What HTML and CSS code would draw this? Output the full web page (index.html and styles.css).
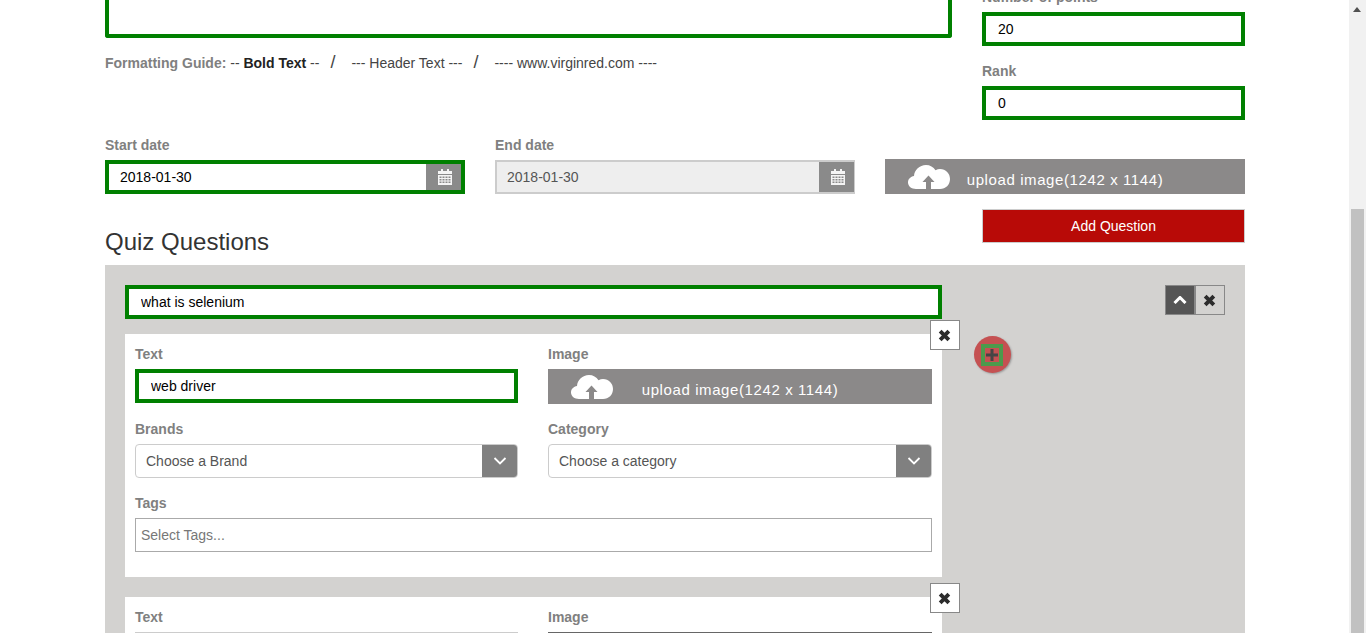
FILE: index.html
```html
<!DOCTYPE html>
<html>
<head>
    <title>Quiz Questions</title>
    <link rel="stylesheet" href="styles.css">
</head>
<body>
    <svg class="icon-defs" width="0" height="0">
        <symbol id="cloud" viewBox="0 0 42 24">
            <path d="M8 24C3.500 24 0 21.200 0 17.500C0 14 2.600 11.600 6 11C6.400 5 11.500 0 18 0C22 0 25.400 2 27.500 5.200C29 4.400 30.500 4 32 4C37.800 4 42 8.500 42 14C42 19.800 37.800 24 32 24H23V17H26.500L20.500 10.500L14.500 17H18V24Z"/>
        </symbol>
        <symbol id="calendar" viewBox="0 0 14 16">
            <path d="M3 0h2v2h4V0h2v2h3v3H0V2h3zM0 6h14v10H0zM1.500 7.500v1.500h2V7.500zm3 0v1.500h2V7.500zm3 0v1.500h2V7.500zm3 0v1.500h2V7.500zm-9 2.500v1.500h2V10zm3 0v1.500h2V10zm3 0v1.500h2V10zm3 0v1.500h2V10zm-9 2.500V14h2v-1.500zm3 0V14h2v-1.500zm3 0V14h2v-1.500zm3 0V14h2v-1.500z" fill-rule="evenodd"/>
        </symbol>
        <symbol id="times" viewBox="0 0 12 12">
            <path d="M2 2l8 8M10 2l-8 8" fill="none" stroke="currentColor" stroke-width="3.600"/>
        </symbol>
        <symbol id="chevron" viewBox="0 0 14 8">
            <path d="M1.500 1l5.500 5.500L12.500 1" fill="none" stroke="currentColor"/>
        </symbol>
    </svg>

    <div class="page">
        <main class="content">
            <section class="top-row">
                <div>
                    <div class="description-box"></div>
                    <p class="format-guide"><b class="guide-title">Formatting Guide:</b> -- <b>Bold Text</b> --<span class="slash">/</span>--- Header Text ---<span class="slash">/</span>---- www.virginred.com ----</p>
                </div>
                <div>
                    <label class="field-label">Number of points</label>
                    <input class="green-input points-input" type="text" value="20">
                    <label class="field-label">Rank</label>
                    <input class="green-input" type="text" value="0">
                </div>
            </section>

            <section class="date-row">
                <div>
                    <label class="field-label">Start date</label>
                    <div class="date-box date-active">
                        <input type="text" value="2018-01-30">
                        <span class="date-addon"><svg class="calendar-icon"><use href="#calendar"/></svg></span>
                    </div>
                </div>
                <div>
                    <label class="field-label">End date</label>
                    <div class="date-box date-disabled">
                        <input type="text" value="2018-01-30" disabled>
                        <span class="date-addon"><svg class="calendar-icon"><use href="#calendar"/></svg></span>
                    </div>
                </div>
                <div class="upload">
                    <svg class="cloud-icon"><use href="#cloud"/></svg>
                    upload image(1242 x 1144)
                </div>
            </section>

            <section class="quiz-head">
                <h2>Quiz Questions</h2>
                <button class="add-question">Add Question</button>
            </section>

            <section class="quiz-panel">
                <div class="question-row">
                    <input class="green-input question-input" type="text" value="what is selenium">
                    <div class="question-tools">
                        <button class="tool-btn tool-up"><svg class="chevron-up"><use href="#chevron"/></svg></button>
                        <button class="tool-btn"><svg class="times-icon"><use href="#times"/></svg></button>
                    </div>
                </div>

                <div class="answer-row">
                    <div class="answer-card">
                        <button class="card-close"><svg class="times-icon"><use href="#times"/></svg></button>
                        <div class="answer-grid">
                            <div>
                                <label class="field-label">Text</label>
                                <input class="green-input" type="text" value="web driver">
                            </div>
                            <div>
                                <label class="field-label">Image</label>
                                <div class="upload">
                                    <svg class="cloud-icon"><use href="#cloud"/></svg>
                                    upload image(1242 x 1144)
                                </div>
                            </div>
                            <div>
                                <label class="field-label">Brands</label>
                                <div class="select-box">
                                    <span class="select-text">Choose a Brand</span>
                                    <span class="select-addon"><svg class="chevron-icon"><use href="#chevron"/></svg></span>
                                </div>
                            </div>
                            <div>
                                <label class="field-label">Category</label>
                                <div class="select-box">
                                    <span class="select-text">Choose a category</span>
                                    <span class="select-addon"><svg class="chevron-icon"><use href="#chevron"/></svg></span>
                                </div>
                            </div>
                            <div class="wide">
                                <label class="field-label">Tags</label>
                                <input class="tags-input" type="text" placeholder="Select Tags...">
                            </div>
                        </div>
                    </div>
                    <button class="add-answer"><span class="add-answer-mark"><svg class="plus-icon" viewBox="0 0 12 12"><path d="M6 0v12M0 6h12"/></svg></span></button>
                </div>

                <div class="answer-row second">
                    <div class="answer-card">
                        <button class="card-close"><svg class="times-icon"><use href="#times"/></svg></button>
                        <div class="answer-grid">
                            <div>
                                <label class="field-label">Text</label>
                                <div class="cut-line"></div>
                            </div>
                            <div>
                                <label class="field-label">Image</label>
                                <div class="cut-line cut-dark"></div>
                            </div>
                        </div>
                    </div>
                </div>
            </section>
        </main>

        <div class="scrollbar">
            <span class="scroll-arrow"></span>
            <span class="scroll-thumb"></span>
        </div>
    </div>
</body>
</html>
```

FILE: styles.css
```css
* {
    box-sizing: border-box;
}
html, body {
    margin: 0;
    height: 633px;
    overflow: hidden;
}
body {
    font-family: "Liberation Sans", Arial, sans-serif;
    font-size: 14px;
    color: #333;
    background: #fff;
}
.icon-defs {
    display: block;
    height: 0;
}
.page {
    display: flex;
    height: 633px;
    overflow: hidden;
}
.content {
    width: 1349px;
    flex: none;
    margin-top: -13px;
    padding: 0 104px 0 105px;
}

/* top fields */
.top-row {
    display: grid;
    grid-template-columns: 847px 263px;
    column-gap: 30px;
}
.description-box {
    height: 51px;
    border: 4px solid #008000;
    border-top: 0;
    border-radius: 0 0 3px 3px;
}
.format-guide {
    margin: 14px 0 0;
    line-height: 20px;
    color: #444;
    white-space: nowrap;
}
.format-guide b {
    color: #222;
}
.format-guide .guide-title {
    color: #808080;
}
.slash {
    font-size: 18px;
    margin: 0 16px 0 11px;
}
.field-label {
    display: block;
    height: 20px;
    line-height: 20px;
    margin-bottom: 5px;
    font-weight: bold;
    color: #808080;
}
.green-input {
    display: block;
    width: 100%;
    height: 34px;
    padding: 0 12px;
    border: 4px solid #008000;
    outline: 0;
    font: 14px "Liberation Sans", Arial, sans-serif;
    color: #000;
    background: #fff;
}
.points-input {
    margin-bottom: 15px;
}

/* dates and upload */
.date-row {
    display: grid;
    grid-template-columns: repeat(3, 360px);
    column-gap: 30px;
    align-items: end;
    margin-top: 15px;
}
.date-box {
    display: flex;
    height: 34px;
}
.date-box input {
    flex: 1;
    min-width: 0;
    border: 0;
    outline: 0;
    padding: 0 11px;
    font: 14px "Liberation Sans", Arial, sans-serif;
    background: transparent;
}
.date-active {
    border: 4px solid #008000;
}
.date-active input {
    color: #000;
}
.date-disabled {
    border: 2px solid #ccc;
    border-right-width: 1px;
    background: #eee;
}
.date-disabled input {
    color: #555;
    padding: 0 10px;
}
.date-addon {
    display: flex;
    align-items: center;
    justify-content: center;
    width: 35px;
    padding-left: 2px;
    background: #8a8a8a;
}
.calendar-icon {
    width: 14px;
    height: 16px;
    fill: #f4f4f4;
}
.upload {
    position: relative;
    height: 35px;
    padding-top: 4px;
    line-height: 33px;
    text-align: center;
    font-size: 15px;
    letter-spacing: 0.6px;
    color: #fff;
    background: #8b8989;
}
.cloud-icon {
    position: absolute;
    left: 23px;
    top: 6px;
    width: 42px;
    height: 24px;
    fill: #fff;
}

/* quiz heading */
.quiz-head {
    display: flex;
    justify-content: space-between;
    height: 56px;
    margin-top: 15px;
}
.quiz-head h2 {
    align-self: flex-end;
    margin: 0;
    padding-bottom: 10px;
    font-size: 24px;
    font-weight: normal;
    line-height: 26px;
    color: #333;
}
.add-question {
    width: 263px;
    height: 34px;
    border: 1px solid #ccc;
    background: #b80a07;
    color: #fff;
    font: 14px "Liberation Sans", Arial, sans-serif;
}

/* quiz panel */
.quiz-panel {
    padding: 20px;
    height: 400px;
    background: #d3d2d0;
}
.question-row {
    display: flex;
    justify-content: space-between;
    margin-bottom: 15px;
}
.question-input {
    width: 817px;
}
.question-tools {
    display: flex;
}
.tool-btn {
    display: flex;
    align-items: center;
    justify-content: center;
    width: 30px;
    height: 30px;
    padding: 0 1px 0 0;
    border: 1px solid #888;
    background: transparent;
    color: #2c2c2c;
}
.tool-up {
    background: #555;
    color: #fff;
}
.times-icon {
    width: 13px;
    height: 13px;
}
.chevron-up {
    width: 14px;
    height: 8px;
    stroke-width: 3;
    transform: rotate(180deg);
}
.answer-row {
    display: flex;
    align-items: flex-start;
    column-gap: 32px;
}
.answer-row.second {
    margin-top: 20px;
}
.answer-card {
    position: relative;
    width: 817px;
    flex: none;
    padding: 10px 10px 25px;
    background: #fff;
}
.card-close {
    position: absolute;
    top: -14px;
    right: -18px;
    display: flex;
    align-items: center;
    justify-content: center;
    width: 30px;
    height: 30px;
    padding: 0 1px 0 0;
    border: 1px solid #888;
    background: #fff;
    color: #2c2c2c;
}
.answer-grid {
    display: grid;
    grid-template-columns: 383px 384px;
    column-gap: 30px;
    row-gap: 15px;
}
.wide {
    grid-column: 1 / 3;
}
.select-box {
    display: flex;
    height: 34px;
    border: 1px solid #ccc;
    border-radius: 4px;
    overflow: hidden;
}
.select-text {
    flex: 1;
    padding-left: 10px;
    line-height: 32px;
    color: #555;
}
.select-addon {
    display: flex;
    align-items: center;
    justify-content: center;
    width: 35px;
    background: #808080;
    color: #fff;
}
.chevron-icon {
    width: 14px;
    height: 8px;
    stroke-width: 1.800;
}
.tags-input {
    display: block;
    width: 100%;
    height: 34px;
    padding: 0 5px;
    border: 1px solid #aaa;
    outline: 0;
    font: 14px "Liberation Sans", Arial, sans-serif;
}
.tags-input::placeholder {
    color: #777;
    opacity: 1;
}
.cut-line {
    height: 34px;
    border-top: 1px solid #ccc;
}
.cut-dark {
    border-top-color: #666;
}
.add-answer {
    display: flex;
    align-items: center;
    justify-content: center;
    width: 37px;
    height: 37px;
    margin-top: 2px;
    padding: 0 1px 0 0;
    border: 0;
    border-radius: 50%;
    background: #c55152;
    box-shadow: 1px 1px 2px #999;
}
.add-answer-mark {
    display: flex;
    align-items: center;
    justify-content: center;
    width: 22px;
    height: 22px;
    border: 4px solid #4c9a4c;
}
.plus-icon {
    width: 12px;
    height: 12px;
    fill: none;
    stroke: #454545;
    stroke-width: 3;
}

/* scrollbar */
.scrollbar {
    width: 17px;
    flex: none;
    background: #f1f1f1;
}
.scroll-arrow {
    display: block;
    width: 0;
    height: 0;
    margin: 7px 0 0 4px;
    border: 4px solid transparent;
    border-top: 0;
    border-bottom: 5px solid #505050;
}
.scroll-thumb {
    display: block;
    width: 13px;
    height: 424px;
    margin: 197px 0 0 2px;
    background: #c1c1c1;
}
```
